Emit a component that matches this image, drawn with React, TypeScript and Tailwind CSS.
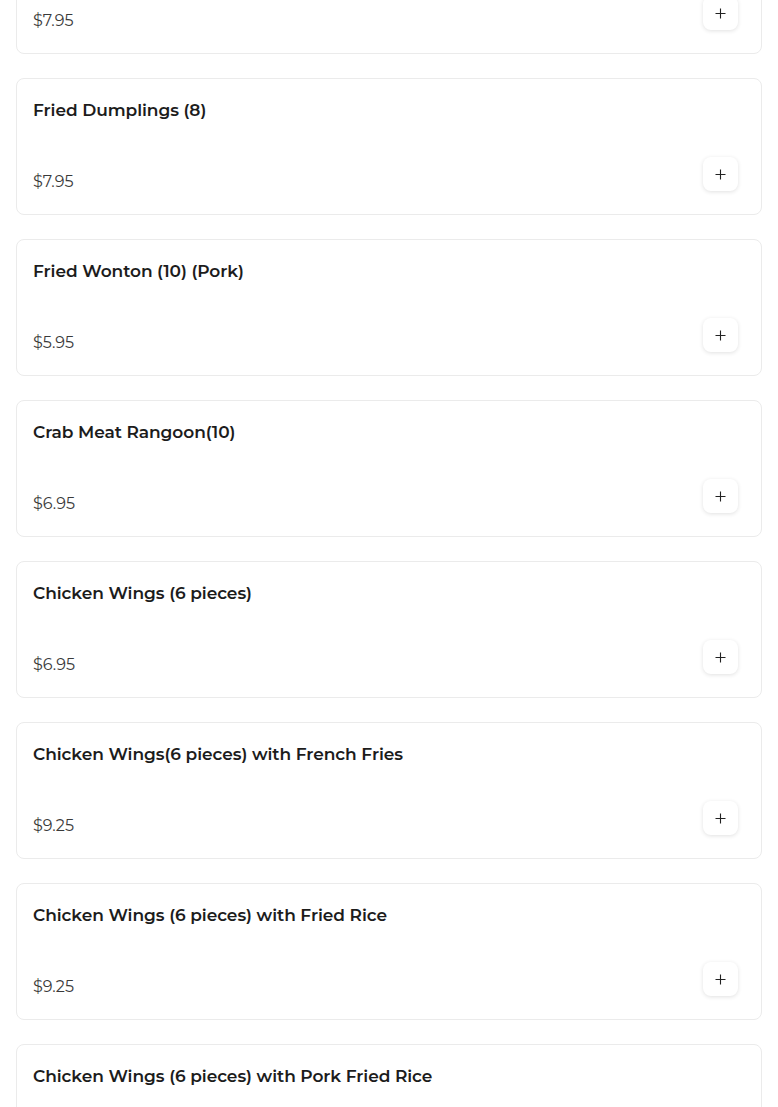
import React from "react";

const items = [
  { name: "", price: "$7.95" },
  { name: "Fried Dumplings (8)", price: "$7.95" },
  { name: "Fried Wonton (10) (Pork)", price: "$5.95" },
  { name: "Crab Meat Rangoon(10)", price: "$6.95" },
  { name: "Chicken Wings (6 pieces)", price: "$6.95" },
  { name: "Chicken Wings(6 pieces) with French Fries", price: "$9.25" },
  { name: "Chicken Wings (6 pieces) with Fried Rice", price: "$9.25" },
  { name: "Chicken Wings (6 pieces) with Pork Fried Rice", price: "$9.25" },
];

function Plus() {
  return (
    <svg width="11" height="11" viewBox="0 0 11 11" fill="none">
      <path d="M5.5 0.5v10M0.5 5.5h10" stroke="#222" strokeWidth="1.1" />
    </svg>
  );
}

export default function App() {
  return (
    <div
      className="h-[1107px] overflow-hidden bg-white px-4"
      style={{ fontFamily: "Montserrat, 'Open Sans', 'Liberation Sans', sans-serif" }}
    >
      <div className="-mt-[83px] flex flex-col gap-6">
        {items.map((it, i) => (
          <div
            key={i}
            className="h-[137px] shrink-0 rounded-lg border border-[#ebebeb] bg-white px-4 pt-[15px]"
          >
            <div className="h-8 text-[17px] font-semibold leading-8 tracking-[-0.06px] text-[#1c1c1c]">
              {it.name}
            </div>
            <div className="mt-[31px] flex items-start justify-between pr-[7px]">
              <div className="mt-[13px] text-[16px] leading-6 text-[#3a3a3a]">{it.price}</div>
              <button className="flex h-[34px] w-[35px] items-center justify-center rounded-lg bg-white shadow-[0_1px_4px_rgba(0,0,0,0.12)]">
                <Plus />
              </button>
            </div>
          </div>
        ))}
      </div>
    </div>
  );
}
